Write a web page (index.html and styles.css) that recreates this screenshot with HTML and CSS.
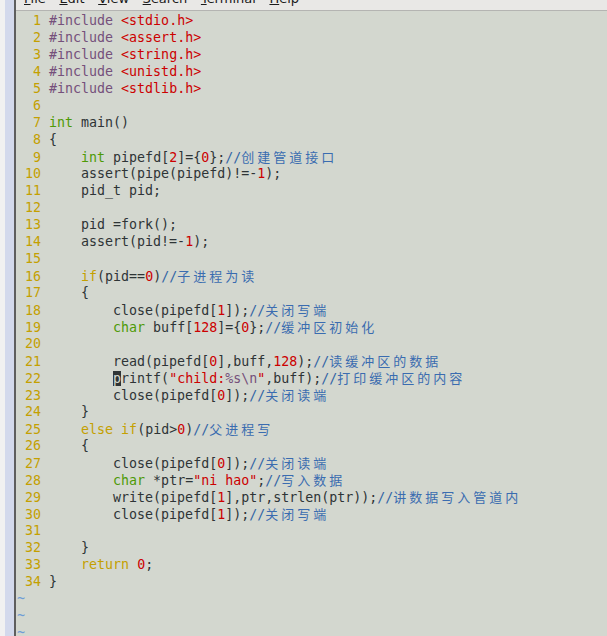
FILE: index.html
```html
<!DOCTYPE html>
<html lang="zh">
<head>
    <meta charset="UTF-8">
    <title>pipe.c - vim</title>
    <link rel="stylesheet" href="styles.css">
</head>
<body>
    <div class="edge"></div>
    <div class="side"></div>
    <div class="side-border"></div>

    <div class="window">
        <div class="menubar">
            <span class="menu"><u>F</u>ile</span>
            <span class="menu"><u>E</u>dit</span>
            <span class="menu"><u>V</u>iew</span>
            <span class="menu"><u>S</u>earch</span>
            <span class="menu"><u>T</u>erminal</span>
            <span class="menu"><u>H</u>elp</span>
        </div>

        <div class="editor">
<div class="ln"><span class="nr">  1 </span><span class="pre">#include</span> <span class="str">&lt;stdio.h&gt;</span></div>
<div class="ln"><span class="nr">  2 </span><span class="pre">#include</span> <span class="str">&lt;assert.h&gt;</span></div>
<div class="ln"><span class="nr">  3 </span><span class="pre">#include</span> <span class="str">&lt;string.h&gt;</span></div>
<div class="ln"><span class="nr">  4 </span><span class="pre">#include</span> <span class="str">&lt;unistd.h&gt;</span></div>
<div class="ln"><span class="nr">  5 </span><span class="pre">#include</span> <span class="str">&lt;stdlib.h&gt;</span></div>
<div class="ln"><span class="nr">  6 </span></div>
<div class="ln"><span class="nr">  7 </span><span class="type">int</span> main()</div>
<div class="ln"><span class="nr">  8 </span>{</div>
<div class="ln"><span class="nr">  9 </span>    <span class="type">int</span> pipefd[<span class="num">2</span>]={<span class="num">0</span>};<span class="cmt">//<span class="cjk">创建管道接口</span></span></div>
<div class="ln"><span class="nr"> 10 </span>    assert(pipe(pipefd)!=-<span class="num">1</span>);</div>
<div class="ln"><span class="nr"> 11 </span>    pid_t pid;</div>
<div class="ln"><span class="nr"> 12 </span></div>
<div class="ln"><span class="nr"> 13 </span>    pid =fork();</div>
<div class="ln"><span class="nr"> 14 </span>    assert(pid!=-<span class="num">1</span>);</div>
<div class="ln"><span class="nr"> 15 </span></div>
<div class="ln"><span class="nr"> 16 </span>    <span class="stmt">if</span>(pid==<span class="num">0</span>)<span class="cmt">//<span class="cjk">子进程为读</span></span></div>
<div class="ln"><span class="nr"> 17 </span>    {</div>
<div class="ln"><span class="nr"> 18 </span>        close(pipefd[<span class="num">1</span>]);<span class="cmt">//<span class="cjk">关闭写端</span></span></div>
<div class="ln"><span class="nr"> 19 </span>        <span class="type">char</span> buff[<span class="num">128</span>]={<span class="num">0</span>};<span class="cmt">//<span class="cjk">缓冲区初始化</span></span></div>
<div class="ln"><span class="nr"> 20 </span></div>
<div class="ln"><span class="nr"> 21 </span>        read(pipefd[<span class="num">0</span>],buff,<span class="num">128</span>);<span class="cmt">//<span class="cjk">读缓冲区的数据</span></span></div>
<div class="ln"><span class="nr"> 22 </span>        <span class="cursor">p</span>rintf(<span class="str">"child:</span><span class="spec">%s\n</span><span class="str">"</span>,buff);<span class="cmt">//<span class="cjk">打印缓冲区的内容</span></span></div>
<div class="ln"><span class="nr"> 23 </span>        close(pipefd[<span class="num">0</span>]);<span class="cmt">//<span class="cjk">关闭读端</span></span></div>
<div class="ln"><span class="nr"> 24 </span>    }</div>
<div class="ln"><span class="nr"> 25 </span>    <span class="stmt">else</span> <span class="stmt">if</span>(pid&gt;<span class="num">0</span>)<span class="cmt">//<span class="cjk">父进程写</span></span></div>
<div class="ln"><span class="nr"> 26 </span>    {</div>
<div class="ln"><span class="nr"> 27 </span>        close(pipefd[<span class="num">0</span>]);<span class="cmt">//<span class="cjk">关闭读端</span></span></div>
<div class="ln"><span class="nr"> 28 </span>        <span class="type">char</span> *ptr=<span class="str">"ni hao"</span>;<span class="cmt">//<span class="cjk">写入数据</span></span></div>
<div class="ln"><span class="nr"> 29 </span>        write(pipefd[<span class="num">1</span>],ptr,strlen(ptr));<span class="cmt">//<span class="cjk">讲数据写入管道内</span></span></div>
<div class="ln"><span class="nr"> 30 </span>        close(pipefd[<span class="num">1</span>]);<span class="cmt">//<span class="cjk">关闭写端</span></span></div>
<div class="ln"><span class="nr"> 31 </span></div>
<div class="ln"><span class="nr"> 32 </span>    }</div>
<div class="ln"><span class="nr"> 33 </span>    <span class="stmt">return</span> <span class="num">0</span>;</div>
<div class="ln"><span class="nr"> 34 </span>}</div>
<div class="ln tilde">~</div>
<div class="ln tilde">~</div>
<div class="ln tilde">~</div>
        </div>
    </div>
</body>
</html>
```

FILE: styles.css
```css
html{
    height: 100%;
}
body{
    margin: 0;
    height: 636px;
    display: flex;
    overflow: hidden;
    background-color: #d3d7cf;
}
.edge{
    width: 5px;
    background-color: #f1f1f1;
}
.side{
    width: 9px;
    background-color: #d3d9ec;
}
.side-border{
    width: 2px;
    background-color: #5e5e5e;
}
.window{
    flex: 1;
    display: flex;
    flex-direction: column;
}
.menubar{
    height: 10px;
    display: flex;
    gap: 13.6px;
    padding-left: 8px;
    background-color: #e9e8e6;
    border-bottom: 1px solid #b4b4b2;
    overflow: hidden;
    font-family: "DejaVu Sans", sans-serif;
    font-size: 13px;
    color: #1a1a1a;
}
.menu{
    line-height: 15px;
    margin-top: -9px;
}
.menu u{
    text-underline-offset: 1px;
}
.editor{
    flex: 1;
    padding: 1px 0 0 1px;
    overflow: hidden;
    background-color: #d3d7cf;
    color: #2e3436;
    font-family: "DejaVu Sans Mono", monospace;
    font-size: 13.3px;
}
.ln{
    height: 17px;
    line-height: 17px;
    white-space: pre;
    overflow: hidden;
}
.nr{
    color: #c4a000;
}
.pre{
    color: #75507b;
}
.str{
    color: #cc0000;
}
.num{
    color: #cc0000;
}
.spec{
    color: #75507b;
}
.type{
    color: #4e9a06;
}
.stmt{
    color: #c4a000;
}
.cmt{
    color: #3465a4;
}
.cjk{
    font-family: "Noto Sans CJK SC", sans-serif;
    font-size: 13px;
    letter-spacing: 3px;
    color: #3a6cb0;
}
.cursor{
    background-color: #2e3436;
    color: #d3d7cf;
}
.tilde{
    color: #6e9dd6;
}
```
